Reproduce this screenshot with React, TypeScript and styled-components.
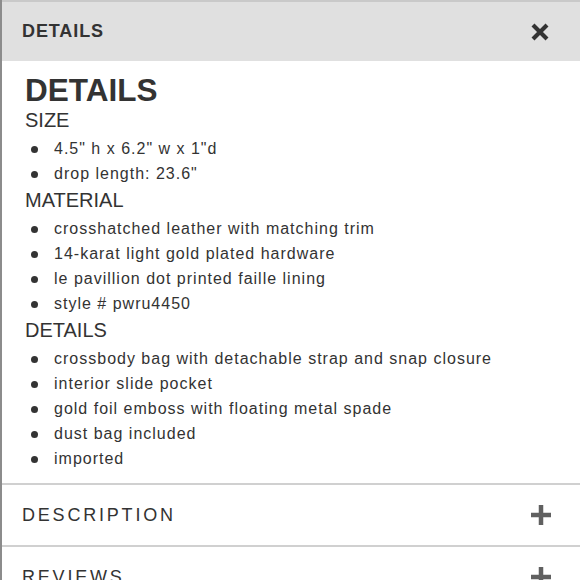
import React from 'react';
import styled, { createGlobalStyle } from 'styled-components';

type Section = {
    heading: string;
    items: string[];
};

const sections: Section[] = [
    {
        heading: 'SIZE',
        items: ['4.5" h x 6.2" w x 1"d', 'drop length: 23.6"'],
    },
    {
        heading: 'MATERIAL',
        items: [
            'crosshatched leather with matching trim',
            '14-karat light gold plated hardware',
            'le pavillion dot printed faille lining',
            'style # pwru4450',
        ],
    },
    {
        heading: 'DETAILS',
        items: [
            'crossbody bag with detachable strap and snap closure',
            'interior slide pocket',
            'gold foil emboss with floating metal spade',
            'dust bag included',
            'imported',
        ],
    },
];

const GlobalStyle = createGlobalStyle`
    html, body {
        margin: 0;
        padding: 0;
        background: #ffffff;
    }
    body {
        font-family: 'Liberation Sans', Arial, Helvetica, sans-serif;
        color: #333333;
        overflow: hidden;
    }
`;

const CloseIcon = () => (
    <svg width="18" height="18" viewBox="0 0 18 18">
        <path d="M2 2 L16 16 M16 2 L2 16" stroke="#333333" strokeWidth="4.2" strokeLinecap="butt" />
    </svg>
);

const PlusIcon = () => (
    <svg width="20" height="20" viewBox="0 0 20 20">
        <path d="M10 0 V20 M0 10 H20" stroke="#606060" strokeWidth="4.5" />
    </svg>
);

const App: React.FC = () => {
    return (
        <>
            <GlobalStyle />
            <Panel>
                <Header>
                    <HeaderTitle>DETAILS</HeaderTitle>
                    <IconButton aria-label="close">
                        <CloseIcon />
                    </IconButton>
                </Header>
                <Content>
                    <BigTitle>DETAILS</BigTitle>
                    {sections.map((section) => (
                        <div key={section.heading}>
                            <SectionHeading>{section.heading}</SectionHeading>
                            <List>
                                {section.items.map((item) => (
                                    <Item key={item}>{item}</Item>
                                ))}
                            </List>
                        </div>
                    ))}
                </Content>
                <AccordionRow>
                    <RowLabel>DESCRIPTION</RowLabel>
                    <IconButton aria-label="expand description">
                        <PlusIcon />
                    </IconButton>
                </AccordionRow>
                <AccordionRow>
                    <RowLabel>REVIEWS</RowLabel>
                    <IconButton aria-label="expand reviews">
                        <PlusIcon />
                    </IconButton>
                </AccordionRow>
            </Panel>
        </>
    );
};

const Panel = styled.div`
    width: 580px;
    height: 580px;
    box-sizing: border-box;
    border-left: 2px solid #8c8c8c;
    display: flex;
    flex-direction: column;
    overflow: hidden;
`;

const Header = styled.div`
    flex: 0 0 auto;
    height: 59px;
    border-top: 2px solid #c9c9c9;
    background: #e0e0e0;
    display: flex;
    align-items: center;
    justify-content: space-between;
    padding: 0 31px 0 20px;
`;

const HeaderTitle = styled.span`
    font-size: 18px;
    font-weight: 700;
    letter-spacing: 0.9px;
    color: #333333;
`;

const IconButton = styled.span`
    display: flex;
    align-items: center;
    justify-content: center;
    cursor: pointer;
`;

const Content = styled.div`
    flex: 0 0 auto;
    padding: 13px 20px 12px 23px;
    border-bottom: 2px solid #d0d0d0;
`;

const BigTitle = styled.h1`
    margin: 0;
    font-size: 31.5px;
    line-height: 32px;
    font-weight: 700;
    color: #333333;
`;

const SectionHeading = styled.div`
    font-size: 20px;
    line-height: 28px;
    color: #333333;
`;

const List = styled.ul`
    list-style: none;
    margin: 2px 0 0;
    padding: 0;
`;

const Item = styled.li`
    position: relative;
    padding-left: 29px;
    font-size: 16px;
    line-height: 25px;
    letter-spacing: 1px;
    color: #333333;

    &::before {
        content: '';
        position: absolute;
        left: 6px;
        top: 9.5px;
        width: 7px;
        height: 7px;
        border-radius: 50%;
        background: #333333;
    }
`;

const AccordionRow = styled.div`
    flex: 0 0 auto;
    height: 60px;
    display: flex;
    align-items: center;
    justify-content: space-between;
    padding: 0 29px 0 20px;
    border-bottom: 2px solid #d0d0d0;
`;

const RowLabel = styled.span`
    font-size: 18px;
    letter-spacing: 2.8px;
    color: #333333;
`;

export default App;
